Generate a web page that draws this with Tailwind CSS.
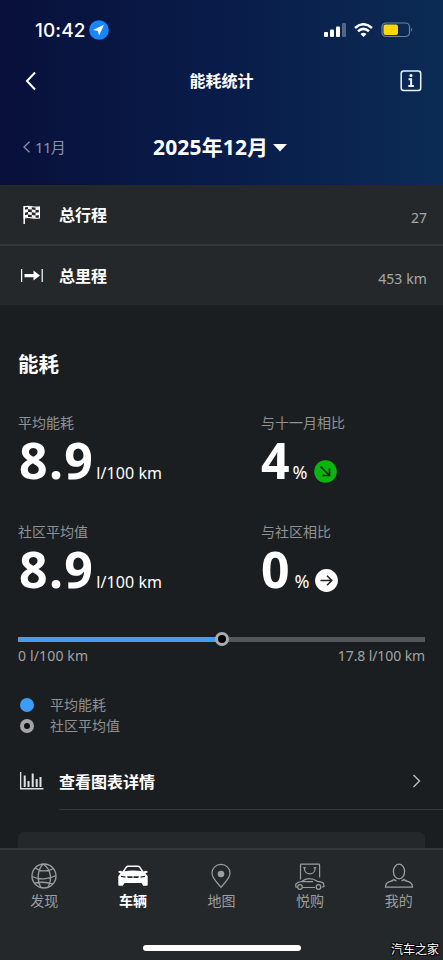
<!DOCTYPE html>
<html lang="zh-CN">
<head>
<meta charset="utf-8">
<title>能耗统计</title>
<script src="https://cdn.jsdelivr.net/npm/@tailwindcss/browser@4"></script>
</head>
<body class="bg-[#1a1e20]">
<div class="relative flex h-[960px] w-[443px] flex-col overflow-hidden bg-[#1b1e20] font-['Noto_Sans','Noto_Sans_CJK_SC',sans-serif] text-white">

  <!-- Header -->
  <header class="h-[185px] shrink-0 bg-linear-to-r from-[#08103b] via-[#091c49] to-[#0b2b55]">
    <div class="flex h-[60px] items-center pl-[35px] pr-[30px]">
      <span class="font-['Inter',sans-serif] text-[19px] font-medium leading-none tracking-[0.1px]">10:42</span>
      <svg class="ml-[3px]" width="20" height="20" viewBox="0 0 20 20"><circle cx="10" cy="10" r="9.8" fill="#1786fb"/><path d="M15 4.8 4 10l4.900 1.100L10 15.600z" fill="#fff"/></svg>
      <svg class="ml-auto" width="23" height="14" viewBox="0 0 23 14" fill="#fff"><rect x="1" y="9" width="4" height="5" rx="1"/><rect x="7" y="6.500" width="4" height="7.500" rx="1"/><rect x="13" y="3.500" width="4" height="10.500" rx="1"/><rect x="19" y="0" width="4" height="14" rx="1" opacity=".3"/></svg>
      <svg class="ml-[8px]" width="19" height="14" viewBox="0 0 19 14" fill="none" stroke="#fff" stroke-width="2.500"><path d="M1 5Q9.500-2.500 18 5"/><path d="M4 8.300Q9.500 3.400 15 8.300"/><path d="M9.500 14 6.500 10.900Q9.500 8.600 12.500 10.900z" fill="#fff" stroke="none"/></svg>
      <svg class="ml-[8px]" width="32" height="16" viewBox="0 0 32 16"><rect x="1" y="1" width="27.500" height="13.500" rx="4" fill="none" stroke="#718199" stroke-width="1.200"/><rect x="2.500" y="2.500" width="14.500" height="10.500" rx="2" fill="#ffd60a"/><path d="M30 5.500q2 2.300 0 4.600z" fill="#718199"/></svg>
    </div>
    <div class="flex h-[42px] items-center justify-between pl-[25px] pr-[21px]">
      <svg width="22" height="20" viewBox="0 0 22 20" fill="none" stroke="#fff" stroke-width="2"><path d="M10 1.500 2 10l8 8.500"/></svg>
      <h1 class="-ml-[4px] text-[16px] font-bold leading-none">能耗统计</h1>
      <svg width="22" height="22" viewBox="0 0 22 22" fill="none" stroke="#e9f1fa"><rect x="1.200" y="1" width="19.500" height="19.500" rx="2.500" stroke-width="1.500"/><circle cx="11" cy="5.500" r="1.500" fill="#fff" stroke="none"/><path d="M8.500 9.200h2.600v6.300M8.300 15.900h5.600" stroke-width="2"/></svg>
    </div>
    <div class="grid h-[90px] grid-cols-[153px_1fr] items-center">
      <div class="flex items-center pl-[22px] text-[#8991ad]">
        <svg width="9" height="12" viewBox="0 0 9 12" fill="none" stroke="currentColor" stroke-width="1.300"><path d="M7.500.8 2 6l5.500 5.200"/></svg>
        <span class="ml-[4px] text-[15px] leading-none tracking-[-0.7px]">11月</span>
      </div>
      <div class="flex items-center">
        <span class="text-[21px] font-bold leading-none tracking-[0.15px]">2025年12月</span>
        <svg class="ml-[5px] mt-[2px]" width="14" height="8" viewBox="0 0 14 8"><path d="M0 0h14L7 7.500z" fill="#fff"/></svg>
      </div>
    </div>
  </header>

  <!-- Totals -->
  <section class="shrink-0 bg-[#25282a]">
    <div class="flex h-[61px] items-center border-b-2 border-[#34383b] pl-[20px] pr-[16px]">
      <svg width="24" height="20" viewBox="0 0 24 20"><path d="M4.200 1v18" stroke="#fff" stroke-width="1.500"/><path d="M4.200 2c5-2 9 1 15.200 0v11c-6 1.200-9-1.700-15.200 0z" fill="none" stroke="#fff" stroke-width="1.200"/><path d="M8 1.600l3.800.4v2.600L8 4.200zM15.500 2.500l4-.3v2.500l-4 .2zM4.500 4.800l3.500-.6v2.800l-3.500.7zM11.800 4.600l3.700.3v2.800l-3.700-.4zM8 7l3.800.3v2.700L8 9.600zM15.500 7.700l4-.4v2.800l-4 .3zM4.500 10.300 8 9.600v2.500l-3.500.3zM11.800 10l3.700.4v2.600l-3.700-.4z" fill="#fff"/></svg>
      <span class="ml-[15px] mt-[1px] text-[16px] font-bold leading-none">总行程</span>
      <span class="ml-auto mt-[7px] text-[14px] leading-none text-[#a6a9ab]">27</span>
    </div>
    <div class="flex h-[59px] items-center pl-[20px] pr-[16px]">
      <svg width="24" height="16" viewBox="0 0 24 16" fill="#fff"><path d="M1 1h1.200v13H1zM21.600 1h1.200v13h-1.200zM4.500 5.900h9V2.500l6.500 5-6.500 5V9.200h-9z"/></svg>
      <span class="ml-[15px] text-[16px] font-bold leading-none">总里程</span>
      <span class="ml-auto mt-[6px] text-[14px] leading-none tracking-[0.1px] text-[#a6a9ab]">453 km</span>
    </div>
  </section>

  <!-- Consumption -->
  <main class="flex flex-col pl-[18px] pr-[18px] pt-[49px]">
    <h2 class="text-[20.500px] font-bold leading-[20px]">能耗</h2>
    <div class="mt-[42px] grid grid-cols-[243px_1fr] gap-y-[39px]">
      <div>
        <p class="text-[14px] leading-[14px] text-[#8f9294]">平均能耗</p>
        <p class="mt-[5px] flex h-[51px] items-baseline leading-[50px]"><span class="ml-[1px] text-[50px] font-bold tracking-[1.300px]">8.9</span><span class="ml-[2px] text-[16px] tracking-[0.1px]">l/100 km</span></p>
      </div>
      <div>
        <p class="text-[14px] leading-[14px] text-[#8f9294]">与十一月相比</p>
        <p class="mt-[5px] flex h-[51px] items-baseline leading-[50px]"><span class="text-[50px] font-bold">4</span><span class="ml-[3px] text-[18px]">%</span>
          <svg class="ml-[6px] translate-y-[4px]" width="23" height="23" viewBox="0 0 23 23"><circle cx="11.500" cy="11.500" r="11.300" fill="#0ab50d"/><path d="m6.500 6.500 9 9M15.500 8.500v7h-7" fill="none" stroke="#10290f" stroke-width="1.700"/></svg></p>
      </div>
      <div>
        <p class="text-[14px] leading-[14px] text-[#8f9294]">社区平均值</p>
        <p class="mt-[5px] flex h-[51px] items-baseline leading-[50px]"><span class="ml-[1px] text-[50px] font-bold tracking-[1.300px]">8.9</span><span class="ml-[2px] text-[16px] tracking-[0.1px]">l/100 km</span></p>
      </div>
      <div>
        <p class="text-[14px] leading-[14px] text-[#8f9294]">与社区相比</p>
        <p class="mt-[5px] flex h-[51px] items-baseline leading-[50px]"><span class="text-[50px] font-bold">0</span><span class="ml-[5px] text-[18px]">%</span>
          <svg class="ml-[5px] translate-y-[4px]" width="23" height="23" viewBox="0 0 23 23"><circle cx="11.500" cy="11.500" r="11.400" fill="#fff"/><path d="M5.500 11.500h11.300M12 6.700l4.800 4.800-4.800 4.800" fill="none" stroke="#222" stroke-width="1.500"/></svg></p>
      </div>
    </div>

    <div class="relative mt-[42px] h-[5px] w-[407px] bg-[#54575a]">
      <div class="h-full w-1/2 bg-[#449ff4]"></div>
      <div class="absolute left-[197px] top-[-5px] size-[14px] rounded-full border-[3.500px] border-[#a9abad] bg-black"></div>
    </div>
    <div class="mt-[7px] flex w-[407px] justify-between text-[14px] leading-[14px] text-[#a0a3a5]"><span class="tracking-[0.15px]">0 l/100 km</span><span class="tracking-[-0.1px]">17.8 l/100 km</span></div>

    <div class="mt-[35px] flex flex-col gap-[7px] pl-[2px] text-[14px] leading-[14px] text-[#8f9294]">
      <div class="flex items-center"><span class="size-[14px] rounded-full bg-[#3c9df8]"></span><span class="ml-[16px]">平均能耗</span></div>
      <div class="flex items-center"><span class="size-[14px] rounded-full border-[4px] border-[#a3a5a7] bg-[#0e1012]"></span><span class="ml-[16px]">社区平均值</span></div>
    </div>
  </main>

  <div class="mt-[28px] flex h-[40px] shrink-0 items-center pl-[20px] pr-[22px]">
    <svg width="24" height="18" viewBox="0 0 24 18" fill="#dfe1e2"><path d="M0 0h1.300v16H23.500v1.500H0zM3.700 3.500h2v11.500h-2zM7.500 9h2v6h-2zM11.700 1.500h2v13.500h-2zM15.700 7h2v8h-2zM19.500 5h2v10h-2z"/></svg>
    <span class="ml-[15px] mt-[2px] text-[16px] font-bold leading-none">查看图表详情</span>
    <svg class="ml-auto" width="9" height="14" viewBox="0 0 9 14" fill="none" stroke="#c1c4c6" stroke-width="1.300"><path d="m1.500 1 6 6-6 6"/></svg>
  </div>
  <div class="ml-[59px] mt-[8px] h-px shrink-0 bg-[#34383a]"></div>
  <div class="ml-[18px] mt-auto h-[16px] w-[407px] shrink-0 rounded-t-[6px] bg-[#25282a]"></div>

  <!-- Tab bar -->
  <nav class="flex h-[112px] shrink-0 flex-col border-t-2 border-[#35383b] bg-[#25282a]">
    <div class="grid h-[62px] grid-cols-5 text-[14px] leading-[14px] text-[#9b9ea0]">
      <div class="flex flex-col items-center pt-[12px]">
        <svg width="30" height="28" viewBox="0 0 30 28" fill="none" stroke="currentColor" stroke-width="1.300"><circle cx="15" cy="14" r="12"/><path d="M14 2C8.500 8 7.500 18 12 25.500M14 2c8 5 9.500 15 5 23.200M6 6c5 3.800 13 3.800 18.500.5M3 14.500c7 3.500 17 3 24-1M5.500 21.200c6-1.500 13-1 18.500.8"/></svg>
        <span class="mt-[4px]">发现</span>
      </div>
      <div class="flex flex-col items-center pt-[12px] font-bold text-white">
        <svg width="30" height="28" viewBox="0 0 30 28"><path d="M5 10 8.500 4.900Q9 4.300 10 4.300H20Q21 4.300 21.500 4.900L25 10" fill="none" stroke="#fff" stroke-width="1.500"/><path d="M.5 9.200q2-1 3.800.4L5.500 9.200Q15 8 24.500 9.200L25.700 9.600q1.800-1.400 3.800-.4v1.300L27.500 11.300l2.200 3V22.800q0 .9-1 .9H25.200L23.500 21H6.500L4.800 23.700H1.300q-1 0-1-.9V14.300l2.200-3-2-.8z" fill="#fff"/><path d="M3 13.700l4.500.8v1.200L3 14.900zM27 13.700l-4.500.8v1.200L27 14.900zM9 14.300h5.500v1.600H9.800zM15.500 14.300H21l-.8 1.600h-4.700z" fill="#25282a"/></svg>
        <span class="mt-[4px]">车辆</span>
      </div>
      <div class="flex flex-col items-center pt-[12px]">
        <svg width="30" height="28" viewBox="0 0 30 28"><path d="M15 25.500C11 20 6 16.500 6 11.300a9 9 0 0 1 18 0C24 16.500 19 20 15 25.500z" fill="none" stroke="currentColor" stroke-width="1.200"/><circle cx="15" cy="12" r="3.300" fill="currentColor"/></svg>
        <span class="mt-[4px]">地图</span>
      </div>
      <div class="flex flex-col items-center pt-[12px]">
        <svg width="30" height="28" viewBox="0 0 30 28" fill="none" stroke="currentColor" stroke-width="1.200"><path d="M5.500 17.500V3q0-.8.800-.8h17.500q.8 0 .8.800v12.500M9.500 6v1c0 6.500 10.500 6.500 10.500 0V6M8.300 5.700h2.400M18.800 5.700h2.400"/><path d="M2.500 25.500.8 24.800V22q2.200-2.300 6-2.500 3.500-2.800 7-2.800 5 0 8.500 2.600 3.500.2 6 1.700l.8 3.500-1.800.8M7.500 25.500H20M7 19.600h11"/><circle cx="5" cy="25" r="2.300"/><circle cx="23.500" cy="25" r="2.300"/></svg>
        <span class="mt-[4px]">悦购</span>
      </div>
      <div class="flex flex-col items-center pt-[12px]">
        <svg width="30" height="28" viewBox="0 0 30 28" fill="none" stroke="currentColor" stroke-width="1.300"><ellipse cx="15" cy="9.500" rx="5.600" ry="7.300"/><path d="M12.500 19c-1-.3-1.700-.8-2.500-1.500-1 1.300-2.500 1.500-4.500 2.100-3 1-4 2.400-4 5.600h27c0-3.200-1-4.600-4-5.600-2-.6-3.500-.8-4.500-2.100-.8.700-1.500 1.200-2.500 1.500"/></svg>
        <span class="mt-[4px]">我的</span>
      </div>
    </div>
    <div class="mx-auto mt-[33px] h-[6px] w-[158px] rounded-full bg-white"></div>
  </nav>

  <div class="absolute right-[4px] top-[943px] text-[12px] leading-[13px] text-white [text-shadow:1px_1px_0_#000,-1px_-1px_0_#000,1px_-1px_0_#000,-1px_1px_0_#000]">汽车之家</div>
</div>
</body>
</html>
